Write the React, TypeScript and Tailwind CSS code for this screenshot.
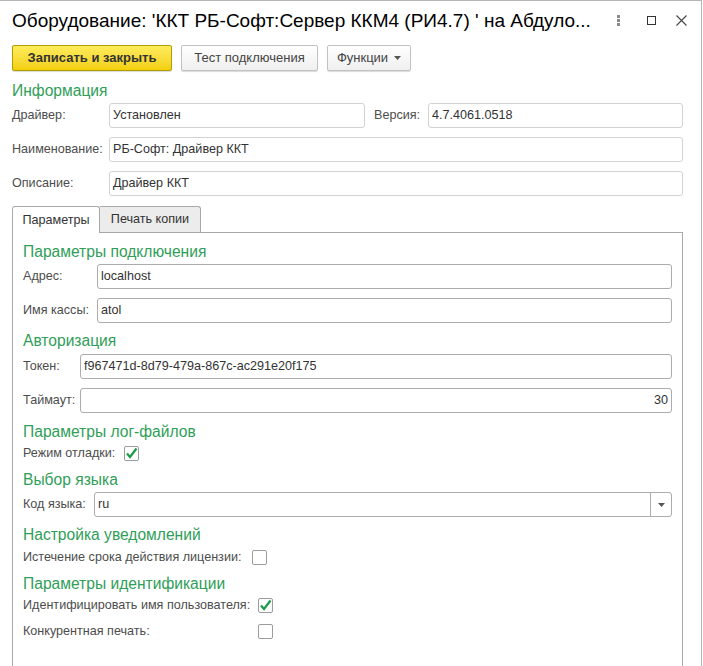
import React from "react";

const font = "font-['Liberation_Sans',Arial,sans-serif]";

const Input = ({ value, className = "", right = false, light = false }: { value: string; className?: string; right?: boolean; light?: boolean }) => (
  <div
    className={`h-[25px] flex items-center rounded-[3px] border bg-white px-[3px] text-[12.6px] text-[#333] ${
      light ? "border-[#d2d2d2]" : "border-[#acacac]"
    } ${right ? "justify-end" : ""} ${className}`}
  >
    {value}
  </div>
);

const Header = ({ children, className = "" }: { children: React.ReactNode; className?: string }) => (
  <div className={`h-[20px] leading-[20px] text-[15.6px] text-[#2f9e58] ${className}`}>{children}</div>
);

const Label = ({ children, className = "" }: { children: React.ReactNode; className?: string }) => (
  <div className={`text-[12.6px] text-[#4d4d4d] whitespace-nowrap ${className}`}>{children}</div>
);

const Check = ({ checked }: { checked?: boolean }) => (
  <div className="w-[15px] h-[15px] rounded-[2px] border border-[#9c9c9c] bg-white flex items-center justify-center">
    {checked && (
      <svg width="13" height="13" viewBox="0 0 13 13">
        <path d="M2 6.5 L5 10 L11.5 1.5" fill="none" stroke="#1b9a45" strokeWidth="2.2" />
      </svg>
    )}
  </div>
);

const Button = ({ children, primary = false, className = "" }: { children: React.ReactNode; primary?: boolean; className?: string }) => (
  <div
    className={`h-[26px] flex items-center justify-center rounded-[2px] border text-[13px] shadow-[0_1px_1px_rgba(0,0,0,0.15)] ${
      primary
        ? "bg-gradient-to-b from-[#ffec5a] to-[#f2cf00] border-[#b39c00] text-[#333] font-bold"
        : "bg-gradient-to-b from-white to-[#efefef] border-[#c2c2c2] text-[#444]"
    } ${className}`}
  >
    {children}
  </div>
);

export default function App() {
  return (
    <div className={`w-[702px] h-[666px] overflow-hidden bg-white border-t border-r border-[#b5b5b5] ${font}`}>
      {/* title bar */}
      <div className="h-[39px] flex items-center pl-[12px]">
        <div className="text-[19px] text-black whitespace-nowrap flex-1 pt-[1px]">
          Оборудование: 'ККТ РБ-Софт:Сервер ККМ4 (РИ4.7) ' на Абдуло...
        </div>
        <div className="flex items-center">
          <div className="w-[3px] flex flex-col gap-[1.5px] mr-[27px]">
            <span className="block w-[3px] h-[2.5px] bg-[#8a8a8a]" />
            <span className="block w-[3px] h-[2.5px] bg-[#8a8a8a]" />
            <span className="block w-[3px] h-[2.5px] bg-[#8a8a8a]" />
          </div>
          <div className="w-[9px] h-[9px] border border-[#333] mr-[20px]" />
          <svg width="11" height="11" viewBox="0 0 11 11" className="mr-[14px]">
            <path d="M0.5 0.5 L10.5 10.5 M10.5 0.5 L0.5 10.5" stroke="#444" strokeWidth="1.1" />
          </svg>
        </div>
      </div>

      <div className="pl-[12px] pr-[18px]">
        {/* toolbar */}
        <div className="flex gap-[9px] mt-[5px]">
          <Button primary className="w-[160px]">Записать и закрыть</Button>
          <Button className="w-[137px]">Тест подключения</Button>
          <Button className="w-[84px] gap-[6px]">
            Функции
            <svg width="7" height="4" viewBox="0 0 7 4">
              <path d="M0 0 H7 L3.5 4 Z" fill="#555" />
            </svg>
          </Button>
        </div>

        <Header className="mt-[10px]">Информация</Header>
        <div className="flex items-center mt-[2px]">
          <Label className="w-[97px]">Драйвер:</Label>
          <Input light value="Установлен" className="w-[256px]" />
          <Label className="ml-[9px] w-[54px]">Версия:</Label>
          <Input light value="4.7.4061.0518" className="flex-1" />
        </div>
        <div className="flex items-center mt-[9px]">
          <Label className="w-[97px]">Наименование:</Label>
          <Input light value="РБ-Софт: Драйвер ККТ" className="flex-1" />
        </div>
        <div className="flex items-center mt-[9px]">
          <Label className="w-[97px]">Описание:</Label>
          <Input light value="Драйвер ККТ" className="flex-1" />
        </div>

        {/* tabs */}
        <div className="flex items-end mt-[9px] h-[27px]">
          <div className="h-[27px] w-[88px] -mb-px relative z-10 bg-white border border-b-0 border-[#a8a8a8] rounded-t-[3px] flex items-center justify-center text-[12.6px] text-[#333]">
            Параметры
          </div>
          <div className="h-[26px] w-[101px] bg-[#ececec] border border-l-0 border-b-0 border-[#a8a8a8] rounded-tr-[3px] flex items-center justify-center text-[12.6px] text-[#333]">
            Печать копии
          </div>
        </div>

        <div className="border border-[#a8a8a8] h-[460px] pl-[10px] pr-[10px] pt-[9px]">
          <Header>Параметры подключения</Header>
          <div className="flex items-center mt-[2px]">
            <Label className="w-[74px]">Адрес:</Label>
            <Input value="localhost" className="flex-1" />
          </div>
          <div className="flex items-center mt-[9px]">
            <Label className="w-[74px]">Имя кассы:</Label>
            <Input value="atol" className="flex-1" />
          </div>

          <Header className="mt-[8px]">Авторизация</Header>
          <div className="flex items-center mt-[3px]">
            <Label className="w-[57px]">Токен:</Label>
            <Input value="f967471d-8d79-479a-867c-ac291e20f175" className="flex-1" />
          </div>
          <div className="flex items-center mt-[9px]">
            <Label className="w-[57px]">Таймаут:</Label>
            <Input value="30" right className="flex-1" />
          </div>

          <Header className="mt-[9px]">Параметры лог-файлов</Header>
          <div className="flex items-center h-[20px] mt-[1px]">
            <Label className="w-[101px]">Режим отладки:</Label>
            <Check checked />
          </div>

          <Header className="mt-[7px]">Выбор языка</Header>
          <div className="flex items-center mt-[2px]">
            <Label className="w-[71px]">Код языка:</Label>
            <div className="flex-1 h-[25px] flex rounded-[3px] border border-[#acacac] bg-white text-[12.6px] text-[#333]">
              <div className="flex-1 flex items-center px-[3px]">ru</div>
              <div className="w-[21px] border-l border-[#acacac] flex items-center justify-center">
                <svg width="7" height="4" viewBox="0 0 7 4">
                  <path d="M0 0 H7 L3.5 4 Z" fill="#555" />
                </svg>
              </div>
            </div>
          </div>

          <Header className="mt-[8px]">Настройка уведомлений</Header>
          <div className="flex items-center h-[20px] mt-[2px]">
            <Label className="w-[229px]">Истечение срока действия лицензии:</Label>
            <Check />
          </div>

          <Header className="mt-[7px]">Параметры идентификации</Header>
          <div className="flex items-center h-[20px] mt-[1px]">
            <Label className="w-[235px]">Идентифицировать имя пользователя:</Label>
            <Check checked />
          </div>
          <div className="flex items-center h-[20px] mt-[6px]">
            <Label className="w-[235px]">Конкурентная печать:</Label>
            <Check />
          </div>
        </div>
      </div>
    </div>
  );
}
